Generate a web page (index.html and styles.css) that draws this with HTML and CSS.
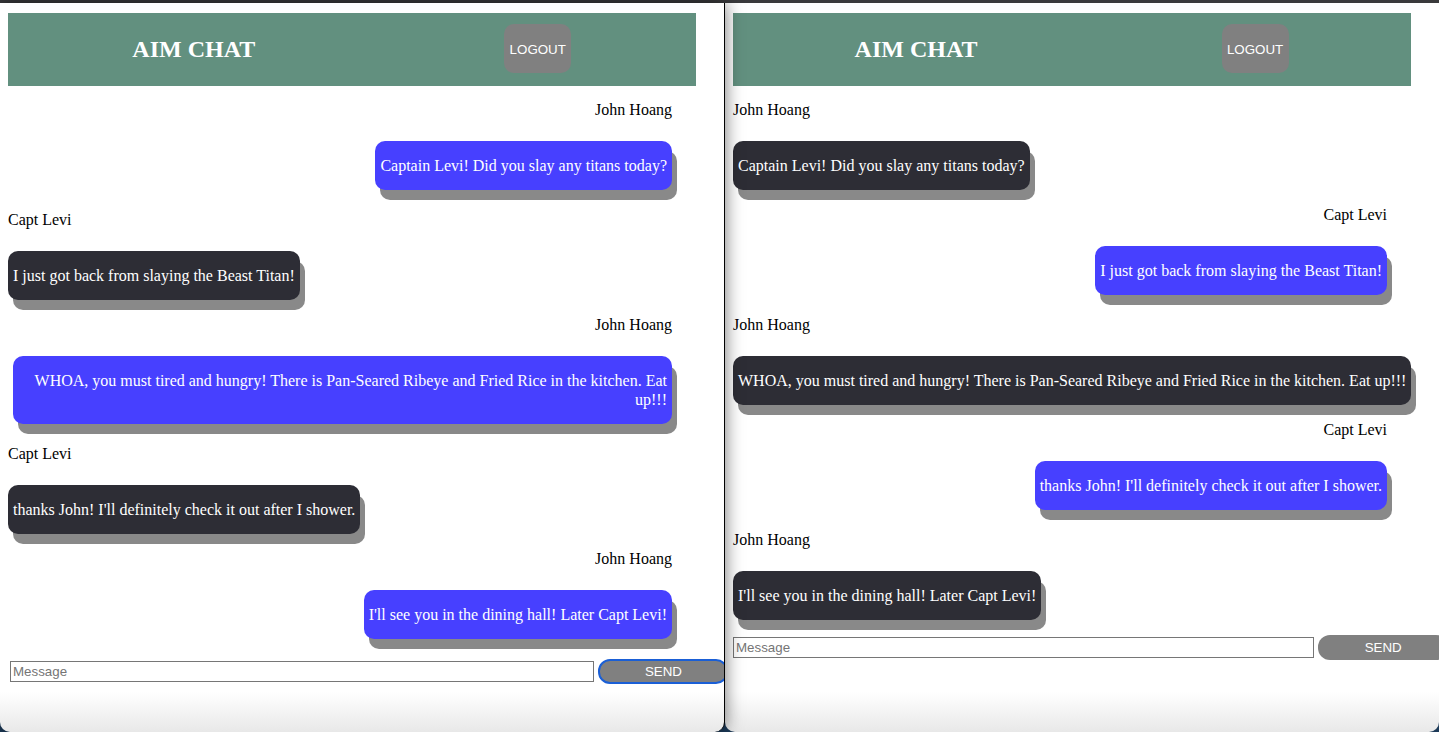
FILE: index.html
```html
<!DOCTYPE html>
<html lang="en">
<head>
<meta charset="utf-8">
<title>AIM Chat</title>
<link rel="stylesheet" href="styles.css">
</head>
<body>
<div class="topbar"></div>
<div class="desktop">
  <section class="window window-front">
    <div class="app">
      <header class="app-header">
        <h1 class="app-title">AIM CHAT</h1>
        <button class="logout-btn">LOGOUT</button>
      </header>
      <div class="chat">
        <div class="msg sent">
          <p class="msg-name">John Hoang</p>
          <p class="bubble">Captain Levi! Did you slay any titans today?</p>
        </div>
        <div class="msg received">
          <p class="msg-name">Capt Levi</p>
          <p class="bubble">I just got back from slaying the Beast Titan!</p>
        </div>
        <div class="msg sent">
          <p class="msg-name">John Hoang</p>
          <p class="bubble">WHOA, you must tired and hungry! There is Pan-Seared Ribeye and Fried Rice in the kitchen. Eat up!!!</p>
        </div>
        <div class="msg received">
          <p class="msg-name">Capt Levi</p>
          <p class="bubble">thanks John! I'll definitely check it out after I shower.</p>
        </div>
        <div class="msg sent">
          <p class="msg-name">John Hoang</p>
          <p class="bubble">I'll see you in the dining hall! Later Capt Levi!</p>
        </div>
      </div>
      <form class="composer composer-focused">
        <input class="composer-input" type="text" placeholder="Message">
        <button class="send-btn send-btn-focused" type="button">SEND</button>
      </form>
    </div>
  </section>
  <section class="window window-back">
    <div class="app">
      <header class="app-header">
        <h1 class="app-title">AIM CHAT</h1>
        <button class="logout-btn">LOGOUT</button>
      </header>
      <div class="chat">
        <div class="msg received">
          <p class="msg-name">John Hoang</p>
          <p class="bubble">Captain Levi! Did you slay any titans today?</p>
        </div>
        <div class="msg sent">
          <p class="msg-name">Capt Levi</p>
          <p class="bubble">I just got back from slaying the Beast Titan!</p>
        </div>
        <div class="msg received">
          <p class="msg-name">John Hoang</p>
          <p class="bubble">WHOA, you must tired and hungry! There is Pan-Seared Ribeye and Fried Rice in the kitchen. Eat up!!!</p>
        </div>
        <div class="msg sent">
          <p class="msg-name">Capt Levi</p>
          <p class="bubble">thanks John! I'll definitely check it out after I shower.</p>
        </div>
        <div class="msg received">
          <p class="msg-name">John Hoang</p>
          <p class="bubble">I'll see you in the dining hall! Later Capt Levi!</p>
        </div>
      </div>
      <form class="composer">
        <input class="composer-input" type="text" placeholder="Message">
        <button class="send-btn" type="button">SEND</button>
      </form>
    </div>
  </section>
</div>
</body>
</html>
```
FILE: styles.css
```css
* { box-sizing: border-box; }

html, body {
  margin: 0;
  padding: 0;
  height: 100%;
  overflow: hidden;
}

body {
  background: #1c3a58;
  font-family: "Liberation Serif", "Times New Roman", serif;
  font-size: 16px;
  color: #000;
}

.topbar {
  height: 3px;
  background: #3a3a3c;
}

.desktop {
  display: flex;
  height: 729px;
}

.window {
  overflow: hidden;
  border-radius: 0 0 10px 10px;
  background: linear-gradient(to bottom, #ffffff calc(100% - 40px), #e8e8e8 100%);
  padding: 10px 0 0 8px;
}

.window-front {
  position: relative;
  z-index: 2;
  width: 725px;
  border-right: 1px solid #000;
  box-shadow: 0 0 18px rgba(0, 0, 0, 0.55);
}

.window-back {
  flex: 1;
  min-width: 0;
}

.app {
  width: calc(100% - 28px);
}

.app-header {
  height: 73px;
  background: #62907f;
  display: grid;
  grid-template-columns: 54% 46%;
  align-items: center;
}

.app-title {
  margin: 0;
  text-align: center;
  font-size: 24px;
  font-weight: bold;
  color: #fff;
  padding-bottom: 1px;
}

.logout-btn {
  justify-self: center;
  width: 67px;
  height: 49px;
  margin-top: -2px;
  border: none;
  border-radius: 10px;
  background: #808080;
  color: #fff;
  font-family: "Liberation Sans", Arial, sans-serif;
  font-size: 13.33px;
  padding: 2px 0 0;
}

.chat {
  display: flex;
  flex-direction: column;
}

.msg {
  display: flex;
  flex-direction: column;
  margin-top: 16px;
}

.msg:first-child { margin-top: 15px; }

.msg.sent { align-items: flex-end; margin-right: 24px; }
.msg.received { align-items: flex-start; }

.msg-name {
  margin: 0;
  line-height: 18px;
}

.bubble {
  margin: 22px 0 0;
  padding: 15px 5px;
  line-height: 19px;
  border-radius: 10px;
  color: #fff;
  box-shadow: 5px 10px 0 #898989;
}

.msg.sent .bubble {
  background: #4740ff;
  text-align: right;
  margin-left: 5px;
  margin-bottom: 5px;
}

.msg.received .bubble {
  background: #2d2d35;
  margin-right: -8px;
}

.composer {
  display: flex;
  align-items: center;
  gap: 4px;
  margin-top: 15px;
  width: 100%;
}

.composer-focused { padding-left: 2px; }

.composer-input {
  width: calc(40% + 310px);
  flex: none;
  height: 21px;
  border: 1px solid #767676;
  padding: 1px 2px;
  font-family: "Liberation Sans", Arial, sans-serif;
  font-size: 13.33px;
  color: #000;
  background: #fff;
}

.composer-input::placeholder { color: #757575; }

.send-btn {
  flex: none;
  width: 130px;
  height: 25px;
  border: none;
  border-radius: 12px;
  background: #808080;
  color: #fff;
  font-family: "Liberation Sans", Arial, sans-serif;
  font-size: 13.33px;
  padding: 0;
}

.send-btn-focused {
  border: 2px solid #1a5fd6;
}
```
